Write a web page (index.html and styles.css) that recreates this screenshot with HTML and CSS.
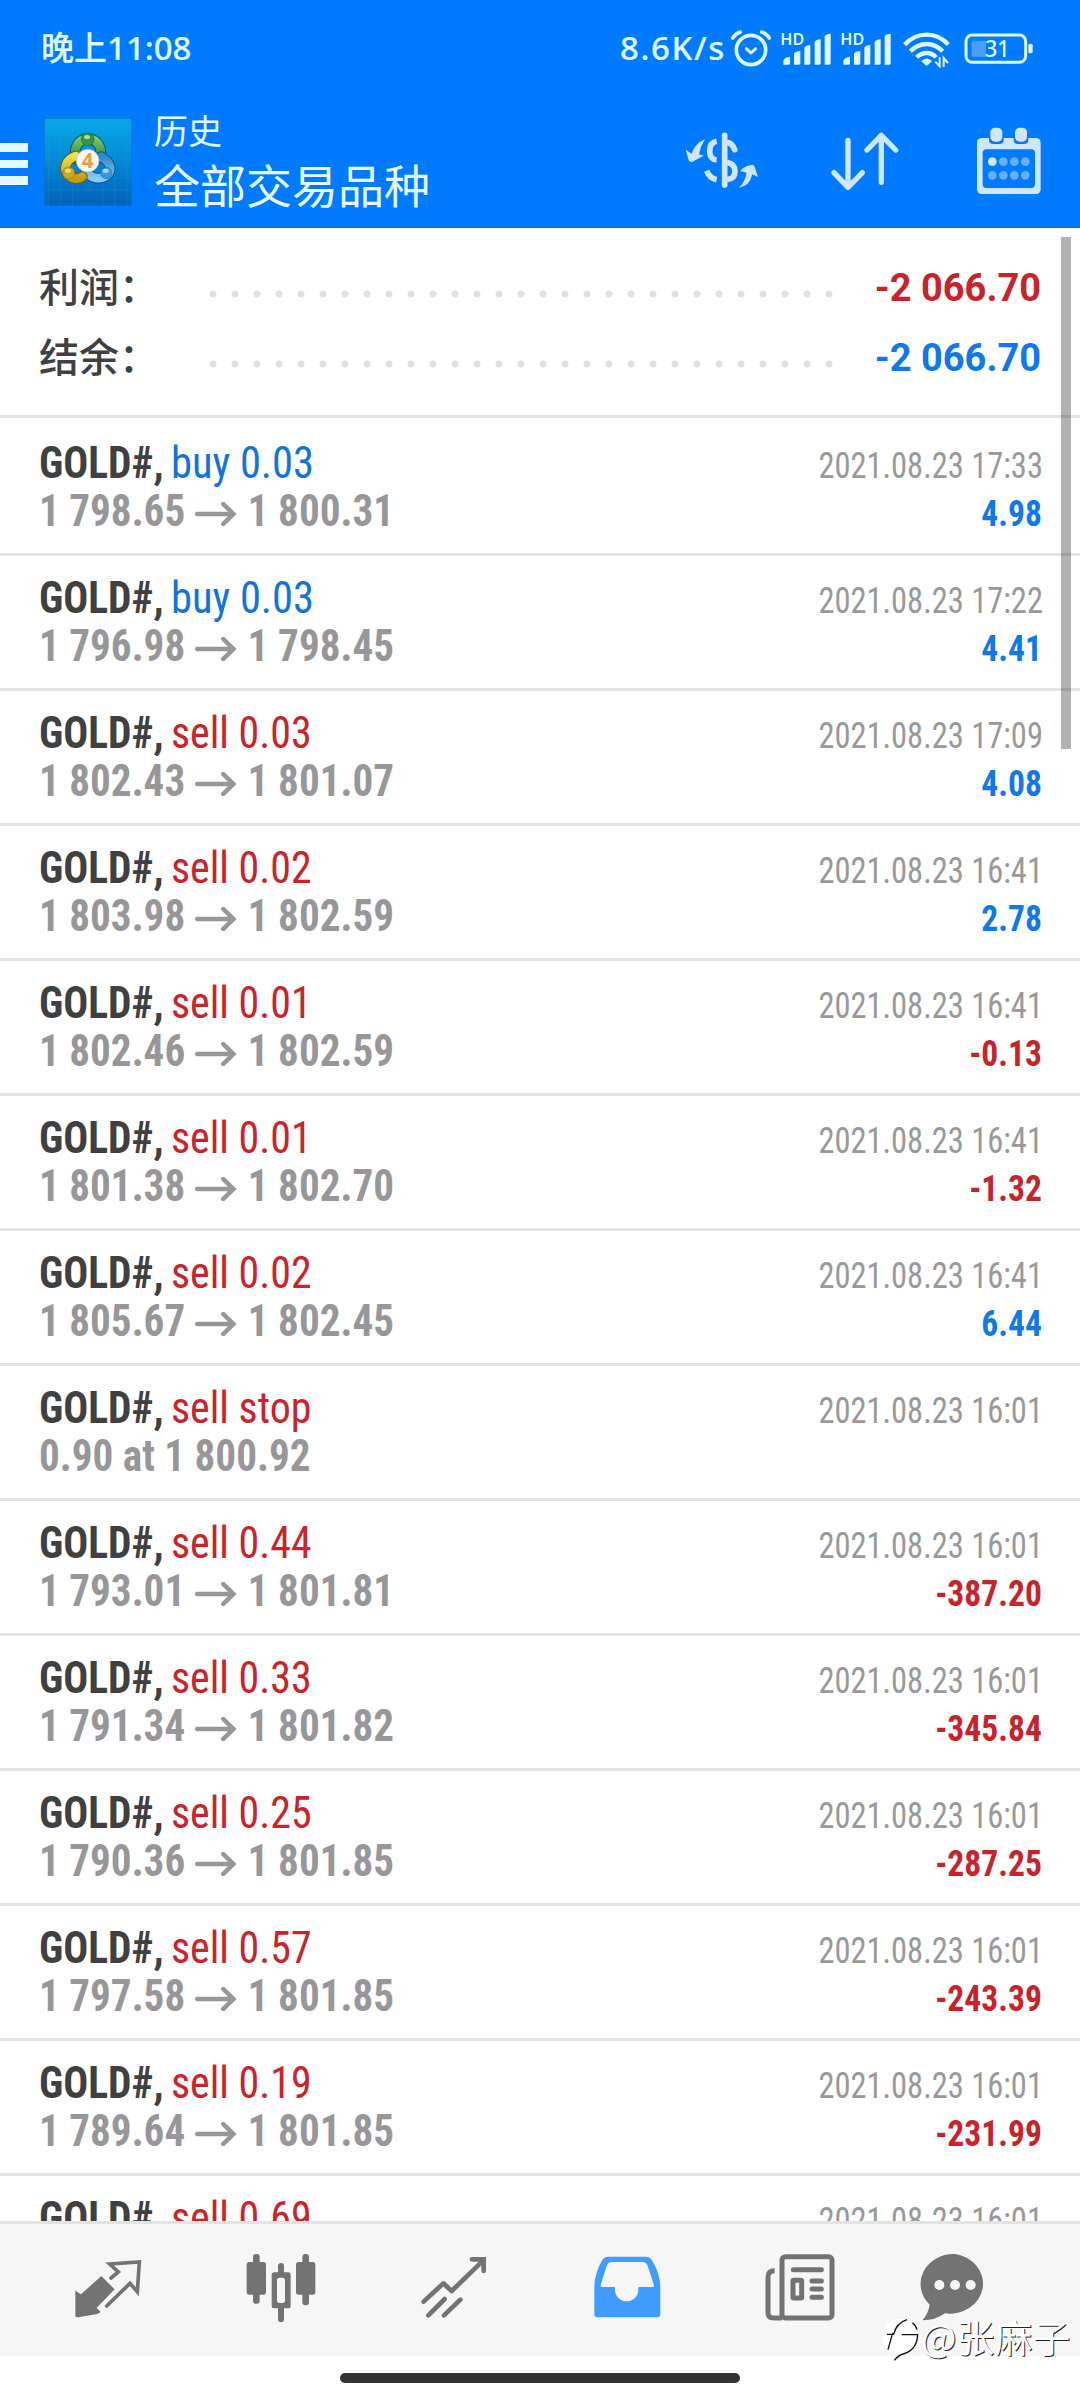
FILE: index.html
```html
<!DOCTYPE html>
<html lang="zh-CN">
<head>
<meta charset="utf-8">
<title>历史</title>
<link rel="stylesheet" href="styles.css">
</head>
<body>
<header class="top">
  <div class="status">
    <span class="clock">晚上11:08</span>
    <span class="rate">8.6K/s</span>
    <svg class="st-alarm" width="40" height="40" viewBox="179 22 120 120" fill="none" stroke="#def7ff" stroke-width="11" stroke-linecap="round" stroke-linejoin="round"><circle cx="239" cy="88" r="44"/><path d="M225 84l14 13 14-13" stroke-width="9"/><path d="M184 52q9-14 23-18M271 34q14 4 23 18"/></svg>
    <svg class="st-sig" width="50" height="40" viewBox="330 22 150 120" fill="#def7ff"><text class="hd" x="328" y="72" textLength="72" lengthAdjust="spacingAndGlyphs">HD</text><path d="M337 132v-12q3-10 20-12v20q0 4-4 4zM369 132V99q4-8 19-8v37q0 4-4 4zM400 132V81q4-8 18-8v55q0 4-4 4zM431 132V64q4-8 18-8v72q0 4-4 4zM461 132V47q4-8 18-8v89q0 4-4 4z"/></svg>
    <svg class="st-sig" width="50" height="40" viewBox="330 22 150 120" fill="#def7ff"><text class="hd" x="328" y="72" textLength="72" lengthAdjust="spacingAndGlyphs">HD</text><path d="M337 132v-12q3-10 20-12v20q0 4-4 4zM369 132V99q4-8 19-8v37q0 4-4 4zM400 132V81q4-8 18-8v55q0 4-4 4zM431 132V64q4-8 18-8v72q0 4-4 4zM461 132V47q4-8 18-8v89q0 4-4 4z"/></svg>
    <svg class="st-wifi" width="47" height="40" viewBox="697 22 141 120" fill="none" stroke="#def7ff" stroke-width="13"><path d="M702 72q28-30 66-30t65 30M719 92q22-22 49-22t48 22M738 110q13-13 30-13t28 13"/><path d="M752 121q16-15 32 0l-12 12q-4 3-8 0z" fill="#def7ff" stroke="none"/><path d="M807 110v27l-13-14M819 139v-27l13 15" stroke-width="6"/></svg>
    <svg class="st-batt" width="69" height="40" viewBox="880 22 207 120" fill="none"><rect x="886" y="43" width="179" height="82" rx="19" stroke="#def7ff" stroke-width="9"/><path d="M946 60v49h-38q-5 0-5-5V65q0-5 5-5z" fill="#479fff"/><rect x="1073" y="69" width="13" height="29" rx="5" fill="#def7ff"/><text class="pct" x="943" y="110" textLength="74" lengthAdjust="spacingAndGlyphs">31</text></svg>
  </div>
  <div class="bar">
    <div class="menu"><i></i><i></i><i></i></div>
    <svg class="logo" width="88" height="88" viewBox="133 26 264 264">
      <defs>
        <linearGradient id="bg" x1="0" y1="0" x2="0" y2="1"><stop offset="0" stop-color="#08a9e8"/><stop offset=".45" stop-color="#048bd9"/><stop offset="1" stop-color="#0261b8"/></linearGradient>
        <linearGradient id="gn" x1="0" y1="0" x2="0" y2="1"><stop offset="0" stop-color="#7cc46d"/><stop offset="1" stop-color="#278a36"/></linearGradient>
        <linearGradient id="yl" x1="0" y1="0" x2="0" y2="1"><stop offset="0" stop-color="#f0e04f"/><stop offset="1" stop-color="#c59a17"/></linearGradient>
        <linearGradient id="bl" x1="0" y1="0" x2="0" y2="1"><stop offset="0" stop-color="#2c8bcf"/><stop offset="1" stop-color="#86caf4"/></linearGradient>
      </defs>
      <rect x="133" y="26" width="264" height="264" fill="url(#bg)" stroke="#0872cf" stroke-width="4"/>
      <path d="M147 26v264M183 26v264M219 26v264M309 26v264M345 26v264M381 26v264M133 62h264M133 116h264M133 152h264M133 206h264M133 242h264" stroke="#2bb0e2" stroke-opacity=".3" stroke-width="2" fill="none"/>
      <g fill="none" stroke-linecap="round">
        <path d="M232 150c-14-30 2-60 33-62 31 2 47 32 33 62" stroke="#0d5650" stroke-width="32"/><path d="M232 150c-14-30 2-60 33-62 31 2 47 32 33 62" stroke="url(#gn)" stroke-width="26"/>
        <path d="M304 142c26 14 36 36 20 54-22 18-52 12-66-12" stroke="#07508c" stroke-width="32"/><path d="M304 142c26 14 36 36 20 54-22 18-52 12-66-12" stroke="url(#bl)" stroke-width="26"/>
        <path d="M228 140c-26 10-38 32-26 52 12 18 34 20 46 10" stroke="#58621e" stroke-width="32"/><path d="M228 140c-26 10-38 32-26 52 12 18 34 20 46 10" stroke="url(#yl)" stroke-width="26"/>
      </g>
      <circle cx="264" cy="90" r="19" fill="#349449" stroke="#1c6c35" stroke-width="2"/><circle cx="207" cy="191" r="18" fill="#d3a620" stroke="#937512" stroke-width="2"/><circle cx="320" cy="191" r="17" fill="#3b98dc" stroke="#1a6bab" stroke-width="2"/>
      <ellipse cx="262" cy="83" rx="9" ry="6" fill="#a9dfa0"/><ellipse cx="205" cy="184" rx="9" ry="6" fill="#f4e27c"/><ellipse cx="318" cy="184" rx="9" ry="6" fill="#a5daf8"/>
      <circle cx="264" cy="154" r="34" fill="#f7f7f7" stroke="#b9b9ae" stroke-width="2"/>
      <text class="four" x="264" y="175" text-anchor="middle">4</text>
    </svg>
    <div class="titles"><span class="t1">历史</span><span class="t2">全部交易品种</span></div>
    <svg class="a-dollar" width="74" height="70" viewBox="46 318 222 210" fill="none" stroke="#cfe6fd"><path d="M165 346v149" stroke-width="17" stroke-linecap="round"/><path d="M169 367q17-1 26 22" stroke-width="17" stroke-linecap="round"/><path d="M172 427q24 4 24 27t-24 25" stroke-width="17"/><path d="M141 364q-21 4-21 29t21 27M111 452q8 22 30 27" stroke-width="17"/><g fill="#cfe6fd" stroke="none"><path d="M106 358q-14 22-18 45l14 4-36 20q-7-1-9-6l-9-32 18 12q11-32 40-43z"/><path d="M207 503q18-14 24-45l-20-5q15-17 36-19 6 0 8 6l10 31-17-8q-8 36-41 40z"/></g></svg>
    <svg class="a-sort" width="70" height="70" viewBox="481 318 210 210" fill="none" stroke="#cfe6fd" stroke-width="16" stroke-linecap="round" stroke-linejoin="round"><path d="M535 361v140M493 458l42 44 43-44M635 487V346M592 390l43-44 43 44"/></svg>
    <svg class="a-cal" width="64" height="70" viewBox="920 318 192 210"><rect x="920" y="354" width="191" height="168" rx="14" fill="#cfe6fd"/><path d="M956 350h44v11q0 11-14 11h-16q-14 0-14-11zM1030 350h44v11q0 11-14 11h-16q-14 0-14-11z" fill="#007aff"/><rect x="960" y="323" width="36" height="42" rx="14" fill="#cfe6fd"/><rect x="1034" y="323" width="36" height="42" rx="14" fill="#cfe6fd"/><rect x="937" y="388" width="157" height="116" rx="11" fill="#007aff"/><g fill="#66b0ff"><circle cx="999" cy="425" r="13"/><circle cx="1032" cy="425" r="13"/><circle cx="1065" cy="425" r="13"/><circle cx="966" cy="466" r="13"/><circle cx="999" cy="466" r="13"/><circle cx="1032" cy="466" r="13"/><circle cx="1065" cy="466" r="13"/></g><circle cx="966" cy="425" r="13" fill="#cfe6fd"/></svg>
  </div>
</header>
<main class="list">
  <section class="summary">
    <div class="sum"><span class="label">利润：</span><span class="dots"></span><b class="neg">-2 066.70</b></div>
    <div class="sum"><span class="label">结余：</span><span class="dots"></span><b class="pos">-2 066.70</b></div>
  </section>
  <div class="row first"><div class="deal"><b>GOLD#,</b><span class="buy">buy 0.03</span></div><time>2021.08.23 17:33</time><div class="price"><span>1 798.65</span><svg class="arrow" viewBox="0 0 42 24"><path d="M0 12h39M28 2l11 10-11 10"/></svg><span>1 800.31</span></div><b class="pl pos">4.98</b></div>
  <div class="row"><div class="deal"><b>GOLD#,</b><span class="buy">buy 0.03</span></div><time>2021.08.23 17:22</time><div class="price"><span>1 796.98</span><svg class="arrow" viewBox="0 0 42 24"><path d="M0 12h39M28 2l11 10-11 10"/></svg><span>1 798.45</span></div><b class="pl pos">4.41</b></div>
  <div class="row"><div class="deal"><b>GOLD#,</b><span class="sell">sell 0.03</span></div><time>2021.08.23 17:09</time><div class="price"><span>1 802.43</span><svg class="arrow" viewBox="0 0 42 24"><path d="M0 12h39M28 2l11 10-11 10"/></svg><span>1 801.07</span></div><b class="pl pos">4.08</b></div>
  <div class="row"><div class="deal"><b>GOLD#,</b><span class="sell">sell 0.02</span></div><time>2021.08.23 16:41</time><div class="price"><span>1 803.98</span><svg class="arrow" viewBox="0 0 42 24"><path d="M0 12h39M28 2l11 10-11 10"/></svg><span>1 802.59</span></div><b class="pl pos">2.78</b></div>
  <div class="row"><div class="deal"><b>GOLD#,</b><span class="sell">sell 0.01</span></div><time>2021.08.23 16:41</time><div class="price"><span>1 802.46</span><svg class="arrow" viewBox="0 0 42 24"><path d="M0 12h39M28 2l11 10-11 10"/></svg><span>1 802.59</span></div><b class="pl neg">-0.13</b></div>
  <div class="row"><div class="deal"><b>GOLD#,</b><span class="sell">sell 0.01</span></div><time>2021.08.23 16:41</time><div class="price"><span>1 801.38</span><svg class="arrow" viewBox="0 0 42 24"><path d="M0 12h39M28 2l11 10-11 10"/></svg><span>1 802.70</span></div><b class="pl neg">-1.32</b></div>
  <div class="row"><div class="deal"><b>GOLD#,</b><span class="sell">sell 0.02</span></div><time>2021.08.23 16:41</time><div class="price"><span>1 805.67</span><svg class="arrow" viewBox="0 0 42 24"><path d="M0 12h39M28 2l11 10-11 10"/></svg><span>1 802.45</span></div><b class="pl pos">6.44</b></div>
  <div class="row"><div class="deal"><b>GOLD#,</b><span class="sell">sell stop</span></div><time>2021.08.23 16:01</time><div class="price"><span>0.90 at 1 800.92</span></div></div>
  <div class="row"><div class="deal"><b>GOLD#,</b><span class="sell">sell 0.44</span></div><time>2021.08.23 16:01</time><div class="price"><span>1 793.01</span><svg class="arrow" viewBox="0 0 42 24"><path d="M0 12h39M28 2l11 10-11 10"/></svg><span>1 801.81</span></div><b class="pl neg">-387.20</b></div>
  <div class="row"><div class="deal"><b>GOLD#,</b><span class="sell">sell 0.33</span></div><time>2021.08.23 16:01</time><div class="price"><span>1 791.34</span><svg class="arrow" viewBox="0 0 42 24"><path d="M0 12h39M28 2l11 10-11 10"/></svg><span>1 801.82</span></div><b class="pl neg">-345.84</b></div>
  <div class="row"><div class="deal"><b>GOLD#,</b><span class="sell">sell 0.25</span></div><time>2021.08.23 16:01</time><div class="price"><span>1 790.36</span><svg class="arrow" viewBox="0 0 42 24"><path d="M0 12h39M28 2l11 10-11 10"/></svg><span>1 801.85</span></div><b class="pl neg">-287.25</b></div>
  <div class="row"><div class="deal"><b>GOLD#,</b><span class="sell">sell 0.57</span></div><time>2021.08.23 16:01</time><div class="price"><span>1 797.58</span><svg class="arrow" viewBox="0 0 42 24"><path d="M0 12h39M28 2l11 10-11 10"/></svg><span>1 801.85</span></div><b class="pl neg">-243.39</b></div>
  <div class="row"><div class="deal"><b>GOLD#,</b><span class="sell">sell 0.19</span></div><time>2021.08.23 16:01</time><div class="price"><span>1 789.64</span><svg class="arrow" viewBox="0 0 42 24"><path d="M0 12h39M28 2l11 10-11 10"/></svg><span>1 801.85</span></div><b class="pl neg">-231.99</b></div>
  <div class="row"><div class="deal"><b>GOLD#,</b><span class="sell">sell 0.69</span></div><time>2021.08.23 16:01</time></div>
  <div class="thumb"></div>
</main>
<nav class="tabs">
  <a><svg width="70" height="74" viewBox="41 30 210 220"><path d="M126 107l40 40-54 55 12 13-10 6-57 10q-9 1-9-8v-72l17 11z" fill="#737373"/><path d="M155 113l22-18-26-24 89-6-6 89-22-25-70 68" fill="none" stroke="#737373" stroke-width="11" stroke-linecap="round"/></svg></a>
  <a><svg width="70" height="74" viewBox="558 30 210 220" fill="#737373"><rect x="560" y="65" width="58" height="98" rx="8"/><rect x="579" y="41" width="20" height="149" rx="9"/><rect x="708" y="65" width="58" height="98" rx="8"/><rect x="727" y="41" width="20" height="154" rx="9"/><path fill-rule="evenodd" d="M643 96h11V78q0-10 9-10t9 10v18h12q8 0 8 8v92q0 8-8 8h-12v32q0 10-9 10t-9-10v-32h-11q-8 0-8-8v-92q0-8 8-8zM659 112q-8 0-8 8v60q0 8 8 8h8q8 0 8-8v-60q0-8-8-8z"/></svg></a>
  <a><svg width="70" height="74" viewBox="1078 30 210 220" fill="none" stroke="#737373" stroke-width="14" stroke-linecap="round" stroke-linejoin="round"><path d="M1092 184l59-55 25 23 95-92M1106 225l49-49M1153 225l49-47"/><path d="M1237 57h35v35" stroke-linejoin="miter"/></svg></a>
  <a><svg width="70" height="74" viewBox="37 30 210 220"><path fill-rule="evenodd" fill="#419cff" d="M84 49h116q10 0 15 8 27 41 27 86v78q0 10-10 10H54q-10 0-10-10v-78q0-45 25-86 5-8 15-8zM96 65q-10 0-14 9L63 134q-1 6 5 6h38v8a35 35 0 0 0 70 0v-8h42q6 0 5-6l-20-60q-5-9-14-9z"/></svg></a>
  <a><svg width="70" height="74" viewBox="558 30 210 220" fill="none" stroke="#737373" stroke-width="15"><rect x="609" y="49" width="150" height="184" rx="10"/><path d="M587 91q-20 0-20 20v106q0 16 18 16h24"/><path d="M643 88h84M699 122h28M699 146h28M699 171h28" stroke-linecap="round"/><rect x="642" y="120" width="26" height="53" rx="2"/></svg></a>
  <a class="last"><svg width="70" height="74" viewBox="1014 30 210 220"><path d="M1119 41a99 90 0 1 1-30 178q-28 21-68 21 18-20 22-47a99 90 0 0 1 76-152z" fill="#737373"/><g fill="#f6f6f6"><circle cx="1072" cy="134" r="15"/><circle cx="1119" cy="134" r="15"/><circle cx="1166" cy="134" r="15"/></g></svg></a>
</nav>
<footer class="gesture"><i></i></footer>
<div class="mark"><svg width="40" height="46" viewBox="900 238 120 138"><circle cx="955" cy="296" r="53" fill="#fff"/><path d="M921 336l14-50M918 290h20q8-34 40-44M962 291h48q-2 46-44 58-14 4-26 19" fill="none" stroke="#111" stroke-width="4"/><path d="M1008 276q-4-14-14-20" fill="none" stroke="#111" stroke-width="4"/></svg><span>@张麻子</span></div>
</body>
</html>
```
FILE: styles.css
```css
*{box-sizing:border-box}
body{margin:0;width:1080px;height:2400px;display:flex;flex-direction:column;background:#fff;overflow:hidden;font-family:"Roboto","Noto Sans CJK SC",sans-serif}
svg{display:block;flex:none}
.top{height:228px;flex:none;background:#007aff;border-bottom:2px solid #1670cf;color:#e4faff}
.status{height:96px;display:flex;align-items:center;padding:0 47px 0 41px;font:500 33px/96px "Noto Sans","Noto Sans CJK SC",sans-serif;color:#def7ff;-webkit-text-stroke:.2px #def7ff}
.status svg{-webkit-text-stroke:0}
.rate{margin-left:auto;letter-spacing:1.6px}
.st-alarm{margin-left:5px}
.st-sig{margin-left:10px}
.st-wifi{margin-left:12px}
.st-batt{margin-left:14px}
.hd{font:600 49px "Noto Sans",sans-serif}
.pct{font:500 68px "Noto Sans",sans-serif;fill:#def7ff}
.four{font:bold 62px "Open Sans",sans-serif;fill:#f39a45}
.bar{height:130px;display:flex;align-items:flex-start;padding-top:22px}
.menu{width:28px;margin-top:25px;display:flex;flex-direction:column;gap:8px}
.menu i{height:8.5px;background:#e4faff}
.logo{margin-left:16px}
.titles{margin-left:22px;width:531px;display:flex;flex-direction:column;font-family:"Noto Sans CJK SC",sans-serif}
.t1{font-size:34px;line-height:40px;margin-top:-8px}
.t2{font-size:46px;line-height:60px;margin-top:3px}
.a-dollar,.a-sort,.a-cal{margin-top:8px}
.a-sort{margin-left:71px}
.a-cal{margin-left:77px}
.list{flex:1;position:relative;overflow:hidden}
.summary{height:190px;border-bottom:3px solid #e3e3e3;padding:21px 39px 0 39px}
.sum{height:70px;display:grid;grid-template-columns:163px 638px 1fr;align-items:center}
.label{font:500 40px/70px "Noto Sans CJK SC",sans-serif;color:#404040;margin-top:-3px}
.dots{height:8px;margin-top:15px;background:radial-gradient(circle at 11px 4px,#e0e0e0 3px,rgba(224,224,224,0) 4px) 0 0/22px 8px repeat-x}
.sum b{font-size:38px;text-align:right;white-space:nowrap;line-height:70px;padding-top:4px}
.pos{color:#0f78ea}
.neg{color:#c9232a}
.row{height:135px;border-bottom:3px solid #e3e3e3;padding:18px 38px 0 39px;display:grid;grid-template-columns:1fr auto;grid-template-rows:48px 48px;align-items:baseline;font-family:"Roboto Condensed","Roboto",sans-serif;line-height:48px;white-space:nowrap}
.first{height:138px;padding-top:21px}
.deal,.price{font-size:44px;display:flex;align-items:baseline;transform-origin:0 50%}
.deal b{color:#404040;transform:scaleX(.942);transform-origin:0 50%}
.deal .buy{color:#1173dc;transform:scaleX(.965);transform-origin:0 50%}
.deal .sell{color:#cc2229;transform:scaleX(.952);transform-origin:0 50%}
.price{color:#97979a;font-weight:bold;transform:scaleX(.935);justify-self:start}
.arrow{width:46px;height:24px;margin:0 10px 8px 11px;fill:none;stroke:#97979a;stroke-width:4.5;stroke-linecap:round}
time{font-size:36px;color:#999;transform:translateX(1px) scaleX(.902);transform-origin:100% 50%}
.pl{font-size:36px;text-align:right;transform:scaleX(.932);transform-origin:100% 50%}
.thumb{position:absolute;left:1061px;top:9px;width:10px;height:512px;background:rgba(0,0,0,.3)}
.tabs{height:135px;flex:none;display:flex;background:#f6f6f6;border-top:3px solid #e3e3e3;padding:26px 0 0 21px}
.tabs a{width:173px;display:flex;justify-content:center}
.tabs .last{width:137px}
.gesture{height:44px;flex:none;background:#fff;padding-top:17px;display:flex;justify-content:center}
.gesture i{width:400px;height:10px;border-radius:5px;background:#333}
.mark{position:absolute;left:881px;top:2317px;display:flex;color:#fff;font:37.5px/37px "Noto Sans CJK SC",sans-serif;letter-spacing:.4px;text-shadow:1px 1px 0 #222}
```
